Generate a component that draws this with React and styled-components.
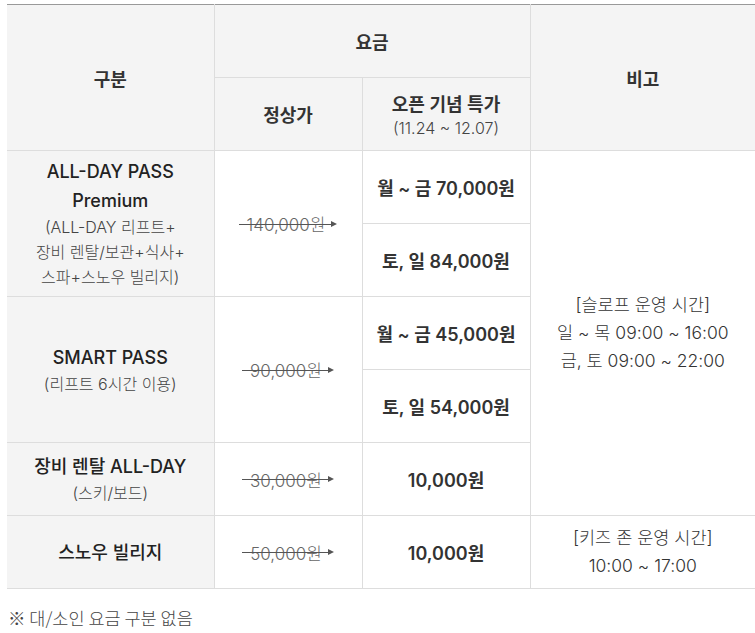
import styled, { createGlobalStyle } from 'styled-components'

const GlobalStyle = createGlobalStyle`
  body {
    margin: 0;
    background: #fff;
    font-family: 'Inter', 'Noto Sans CJK KR', sans-serif;
    color: #333;
  }
`

const Page = styled.div`
  padding: 4px 0 0 7px;
`

const Table = styled.table`
  width: 748px;
  border-collapse: collapse;
  table-layout: fixed;
  border-top: 1px solid #999;
  text-align: center;
`

const Row = styled.tr`
  height: 73px;
`

const Head = styled.th`
  background: #f4f4f4;
  border: 1px solid #ddd;
  border-top: none;
  font-size: 18px;
  font-weight: 600;
  color: #333;
  padding: 0;
  &:first-child {
    border-left: none;
  }
  &:last-child {
    border-right: none;
  }
  small {
    display: block;
    font-size: 16px;
    font-weight: 300;
    color: #444;
    margin-top: 2px;
  }
`

const Cell = styled.td`
  border: 1px solid #ddd;
  padding: 0;
  vertical-align: middle;
  background: ${(p) => (p.$label ? '#f4f4f4' : '#fff')};
  font-size: 17px;
  color: #333;
  &:first-child {
    border-left: none;
  }
  &:last-child {
    border-right: none;
  }
`

const Name = styled.div`
  font-size: 18px;
  font-weight: 500;
  line-height: 29px;
  color: #222;
`

const Sub = styled.div`
  font-size: 16px;
  font-weight: 300;
  line-height: 25px;
  color: #444;
`

const Price = styled.div`
  font-size: 18px;
  font-weight: 600;
  color: #333;
`

const Strike = styled.span`
  position: relative;
  display: inline-block;
  padding: 0 12px 0 8px;
  font-size: 17px;
  font-weight: 300;
  color: #666;
  &::after {
    content: '';
    position: absolute;
    left: 0;
    right: 5px;
    top: 51%;
    border-top: 1px solid #555;
  }
  &::before {
    content: '';
    position: absolute;
    right: 0;
    top: calc(51% - 3px);
    border-left: 6px solid #555;
    border-top: 3.5px solid transparent;
    border-bottom: 3.5px solid transparent;
  }
`

const Note = styled.div`
  font-size: 17.5px;
  font-weight: 300;
  line-height: 28px;
  color: #333;
`

const Footnote = styled.p`
  margin: 16px 0 0 1px;
  font-family: 'Noto Sans CJK KR', sans-serif;
  font-size: 17.5px;
  font-weight: 300;
  color: #444;
`

const App = () => {
  return (
    <Page>
      <GlobalStyle />
      <Table>
        <colgroup>
          <col style={{ width: 207 }} />
          <col style={{ width: 148 }} />
          <col style={{ width: 168 }} />
          <col />
        </colgroup>
        <thead>
          <Row>
            <Head rowSpan={2}>구분</Head>
            <Head colSpan={2}>요금</Head>
            <Head rowSpan={2}>비고</Head>
          </Row>
          <Row>
            <Head>정상가</Head>
            <Head>
              오픈 기념 특가
              <small>(11.24 ~ 12.07)</small>
            </Head>
          </Row>
        </thead>
        <tbody>
          <Row>
            <Cell $label rowSpan={2}>
              <Name>ALL-DAY PASS<br />Premium</Name>
              <Sub>(ALL-DAY 리프트+<br />장비 렌탈/보관+식사+<br />스파+스노우 빌리지)</Sub>
            </Cell>
            <Cell rowSpan={2}><Strike>140,000원</Strike></Cell>
            <Cell><Price>월 ~ 금 70,000원</Price></Cell>
            <Cell rowSpan={5}>
              <Note>[슬로프 운영 시간]<br />일 ~ 목 09:00 ~ 16:00<br />금, 토 09:00 ~ 22:00</Note>
            </Cell>
          </Row>
          <Row>
            <Cell><Price>토, 일 84,000원</Price></Cell>
          </Row>
          <Row>
            <Cell $label rowSpan={2}>
              <Name>SMART PASS</Name>
              <Sub>(리프트 6시간 이용)</Sub>
            </Cell>
            <Cell rowSpan={2}><Strike>90,000원</Strike></Cell>
            <Cell><Price>월 ~ 금 45,000원</Price></Cell>
          </Row>
          <Row>
            <Cell><Price>토, 일 54,000원</Price></Cell>
          </Row>
          <Row>
            <Cell $label>
              <Name>장비 렌탈 ALL-DAY</Name>
              <Sub>(스키/보드)</Sub>
            </Cell>
            <Cell><Strike>30,000원</Strike></Cell>
            <Cell><Price>10,000원</Price></Cell>
          </Row>
          <Row>
            <Cell $label><Name>스노우 빌리지</Name></Cell>
            <Cell><Strike>50,000원</Strike></Cell>
            <Cell><Price>10,000원</Price></Cell>
            <Cell>
              <Note>[키즈 존 운영 시간]<br />10:00 ~ 17:00</Note>
            </Cell>
          </Row>
        </tbody>
      </Table>
      <Footnote>※ 대/소인 요금 구분 없음</Footnote>
    </Page>
  )
}

export default App
